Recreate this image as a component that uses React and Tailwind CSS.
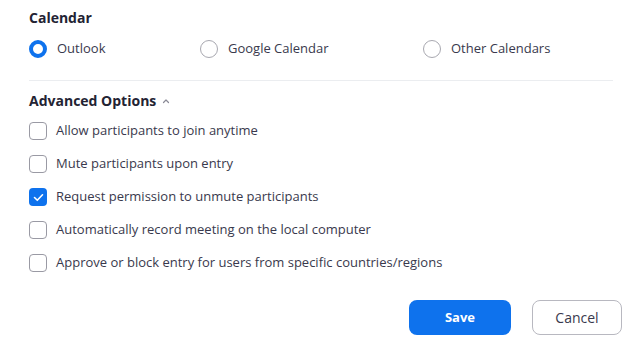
import React, { useState } from 'react';

const Radio = ({ label, checked, onClick }) => (
  <button type="button" onClick={onClick} className="flex items-center gap-[10px] text-left">
    {checked ? (
      <span className="w-[18px] h-[18px] rounded-full border-[4px] border-[#0e72ed] bg-white" />
    ) : (
      <span className="w-[18px] h-[18px] rounded-full border-[1.5px] border-[#a8a8b0] bg-white" />
    )}
    <span className="text-[13px] text-[#39394d]">{label}</span>
  </button>
);

const Checkbox = ({ label, checked, onClick }) => (
  <button type="button" onClick={onClick} className="flex items-center gap-[9px] h-[18px] text-left">
    {checked ? (
      <span className="w-[18px] h-[18px] rounded-[4px] bg-[#0e72ed] flex items-center justify-center">
        <svg width="11" height="9" viewBox="0 0 11 9" fill="none">
          <path d="M1.5 4.5l2.8 2.8L9.5 1.8" stroke="white" strokeWidth="1.6" strokeLinecap="round" strokeLinejoin="round" />
        </svg>
      </span>
    ) : (
      <span className="w-[18px] h-[18px] rounded-[4px] border border-[#9a9aa4] bg-white" />
    )}
    <span className="text-[13px] text-[#39394d]">{label}</span>
  </button>
);

export default function App() {
  const [calendar, setCalendar] = useState('outlook');
  const [options, setOptions] = useState({
    anytime: false,
    mute: false,
    unmute: true,
    record: false,
    countries: false,
  });

  const toggle = (key) => setOptions((o) => ({ ...o, [key]: !o[key] }));

  const items = [
    ['anytime', 'Allow participants to join anytime'],
    ['mute', 'Mute participants upon entry'],
    ['unmute', 'Request permission to unmute participants'],
    ['record', 'Automatically record meeting on the local computer'],
    ['countries', 'Approve or block entry for users from specific countries/regions'],
  ];

  return (
    <div className="w-[640px] h-[352px] bg-white font-['Open_Sans',sans-serif] pl-[29px] pr-[18px] pt-[8px]">
      {/* Calendar */}
      <h2 className="text-[14px] font-bold text-[#232333] leading-[20px]">Calendar</h2>
      <div className="flex items-center mt-[12px] h-[18px]">
        <div className="w-[171px]">
          <Radio label="Outlook" checked={calendar === 'outlook'} onClick={() => setCalendar('outlook')} />
        </div>
        <div className="w-[223px]">
          <Radio label="Google Calendar" checked={calendar === 'google'} onClick={() => setCalendar('google')} />
        </div>
        <Radio label="Other Calendars" checked={calendar === 'other'} onClick={() => setCalendar('other')} />
      </div>

      <div className="mt-[22px] mr-[9px] border-t border-[#ebedf0]" />

      {/* Advanced options */}
      <div className="flex items-center gap-[6px] mt-[9px] h-[20px]">
        <h2 className="text-[14px] font-bold text-[#232333]">Advanced Options</h2>
        <svg width="8" height="6" viewBox="0 0 8 6" fill="none" className="mt-[1px]">
          <path d="M1.5 4.5L4 2l2.5 2.5" stroke="#8a8a96" strokeWidth="1.2" strokeLinecap="round" strokeLinejoin="round" />
        </svg>
      </div>
      <div className="flex flex-col gap-[15px] mt-[12px]">
        {items.map(([key, label]) => (
          <Checkbox key={key} label={label} checked={options[key]} onClick={() => toggle(key)} />
        ))}
      </div>

      <div className="flex justify-end gap-[21px] mt-[28px]">
        <button type="button" className="w-[102px] h-[35px] rounded-[8px] bg-[#0e72ed] text-white text-[13px] font-bold">
          Save
        </button>
        <button type="button" className="w-[90px] h-[35px] rounded-[8px] border border-[#b8b8c0] bg-white text-[#39394d] text-[14px]">
          Cancel
        </button>
      </div>
    </div>
  );
}
